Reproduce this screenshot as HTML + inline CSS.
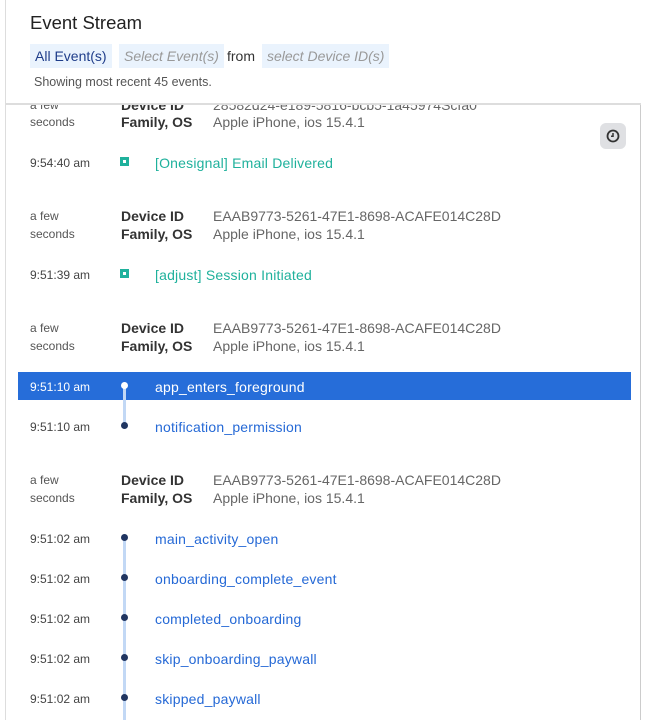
<!DOCTYPE html>
<html><head><style>
body{margin:0;width:645px;height:720px;overflow:hidden;background:#fff;font-family:"Liberation Sans",sans-serif;position:relative}
.a{position:absolute;white-space:nowrap}
.t{font-size:12px;color:#444}
.s{font-size:12px;color:#555}
.k{font-size:14px;color:#333;font-weight:bold}
.v{font-size:14px;color:#666}
.e{font-size:14px;color:#2569d6;letter-spacing:.2px}
.g{font-size:14px;color:#1fb19c;letter-spacing:.2px}
.d{position:absolute;left:121px;width:7px;height:7px;border-radius:50%;background:#1f3561}
.sq{position:absolute;left:120px;width:9px;height:9px;background:#1fb19c}
.sq:after{content:"";position:absolute;left:3px;top:3px;width:3px;height:3px;background:#fff}
.tag{position:absolute;top:44px;height:24px;background:#eaf3fd;font-size:14px;line-height:24px;padding:0 5px}
</style></head><body>
<div class="a" style="left:5px;top:0;width:1px;height:720px;background:#ddd"></div>
<div class="a" style="left:640px;top:104px;width:1px;height:616px;background:#ccc"></div>
<div class="a" style="left:5px;top:103px;width:636px;height:2px;background:#ddd"></div>
<div class="a" style="left:30px;top:12px;font-size:18.5px;color:#222">Event Stream</div>
<div class="tag" style="left:30px;color:#1f3d8a">All Event(s)</div>
<div class="tag" style="left:119px;color:#999;font-style:italic">Select Event(s)</div>
<div class="a" style="left:227px;top:44px;line-height:24px;font-size:14px;color:#333">from</div>
<div class="tag" style="left:262px;color:#999;font-style:italic">select Device ID(s)</div>
<div class="a" style="left:34px;top:75px;font-size:12.5px;color:#555">Showing most recent 45 events.</div>

<div style="position:absolute;left:0;top:105px;width:640px;height:615px;overflow:hidden">
<div style="position:relative;top:-105px">
<div class="a s" style="left:30px;top:98px">a few</div>
<div class="a k" style="left:121px;top:97px">Device ID</div>
<div class="a v" style="left:213px;top:97px">28582d24-e189-5816-bcb5-1a45974Scfa0</div>
</div></div>
<div class="a s" style="left:30px;top:115px">seconds</div>
<div class="a k" style="left:121px;top:114px">Family, OS</div>
<div class="a v" style="left:213px;top:114px">Apple iPhone, ios 15.4.1</div>
<div class="a" style="left:600px;top:123px;width:26px;height:26px;border-radius:6px;background:#dfe0e3"></div>
<svg class="a" style="left:605px;top:128px" width="16" height="16" viewBox="0 0 16 16"><circle cx="8" cy="8" r="5.5" fill="none" stroke="#333" stroke-width="1.8"/><path d="M8 5v3.2H6" fill="none" stroke="#333" stroke-width="1.5"/></svg>

<div class="a t" style="left:30px;top:156px">9:54:40 am</div><div class="sq" style="top:157px"></div>
<div class="a g" style="left:155px;top:155px">[Onesignal] Email Delivered</div>

<div class="a s" style="left:30px;top:209px">a few</div><div class="a s" style="left:30px;top:227px">seconds</div>
<div class="a k" style="left:121px;top:208px">Device ID</div><div class="a k" style="left:121px;top:226px">Family, OS</div>
<div class="a v" style="left:213px;top:208px">EAAB9773-5261-47E1-8698-ACAFE014C28D</div>
<div class="a v" style="left:213px;top:226px">Apple iPhone, ios 15.4.1</div>

<div class="a t" style="left:30px;top:268px">9:51:39 am</div><div class="sq" style="top:269px"></div>
<div class="a g" style="left:155px;top:267px">[adjust] Session Initiated</div>

<div class="a s" style="left:30px;top:321px">a few</div><div class="a s" style="left:30px;top:339px">seconds</div>
<div class="a k" style="left:121px;top:320px">Device ID</div><div class="a k" style="left:121px;top:338px">Family, OS</div>
<div class="a v" style="left:213px;top:320px">EAAB9773-5261-47E1-8698-ACAFE014C28D</div>
<div class="a v" style="left:213px;top:338px">Apple iPhone, ios 15.4.1</div>

<div class="a" style="left:18px;top:372px;width:613px;height:28px;background:#266dd9"></div>
<div class="a" style="left:123px;top:386px;width:3px;height:40px;background:#c2d8f5"></div>
<div class="a t" style="left:30px;top:380px;color:#fff">9:51:10 am</div>
<div class="d" style="top:382px;background:#fff"></div>
<div class="a e" style="left:155px;top:379px;color:#fff">app_enters_foreground</div>
<div class="a t" style="left:30px;top:420px">9:51:10 am</div><div class="d" style="top:422px"></div>
<div class="a e" style="left:155px;top:419px">notification_permission</div>

<div class="a s" style="left:30px;top:473px">a few</div><div class="a s" style="left:30px;top:491px">seconds</div>
<div class="a k" style="left:121px;top:472px">Device ID</div><div class="a k" style="left:121px;top:490px">Family, OS</div>
<div class="a v" style="left:213px;top:472px">EAAB9773-5261-47E1-8698-ACAFE014C28D</div>
<div class="a v" style="left:213px;top:490px">Apple iPhone, ios 15.4.1</div>

<div class="a" style="left:123px;top:538px;width:3px;height:182px;background:#c2d8f5"></div>
<div class="a t" style="left:30px;top:532px">9:51:02 am</div><div class="d" style="top:534px"></div>
<div class="a e" style="left:155px;top:531px">main_activity_open</div>
<div class="a t" style="left:30px;top:572px">9:51:02 am</div><div class="d" style="top:574px"></div>
<div class="a e" style="left:155px;top:571px">onboarding_complete_event</div>
<div class="a t" style="left:30px;top:612px">9:51:02 am</div><div class="d" style="top:614px"></div>
<div class="a e" style="left:155px;top:611px">completed_onboarding</div>
<div class="a t" style="left:30px;top:652px">9:51:02 am</div><div class="d" style="top:654px"></div>
<div class="a e" style="left:155px;top:651px">skip_onboarding_paywall</div>
<div class="a t" style="left:30px;top:692px">9:51:02 am</div><div class="d" style="top:694px"></div>
<div class="a e" style="left:155px;top:691px">skipped_paywall</div>
</body></html>
